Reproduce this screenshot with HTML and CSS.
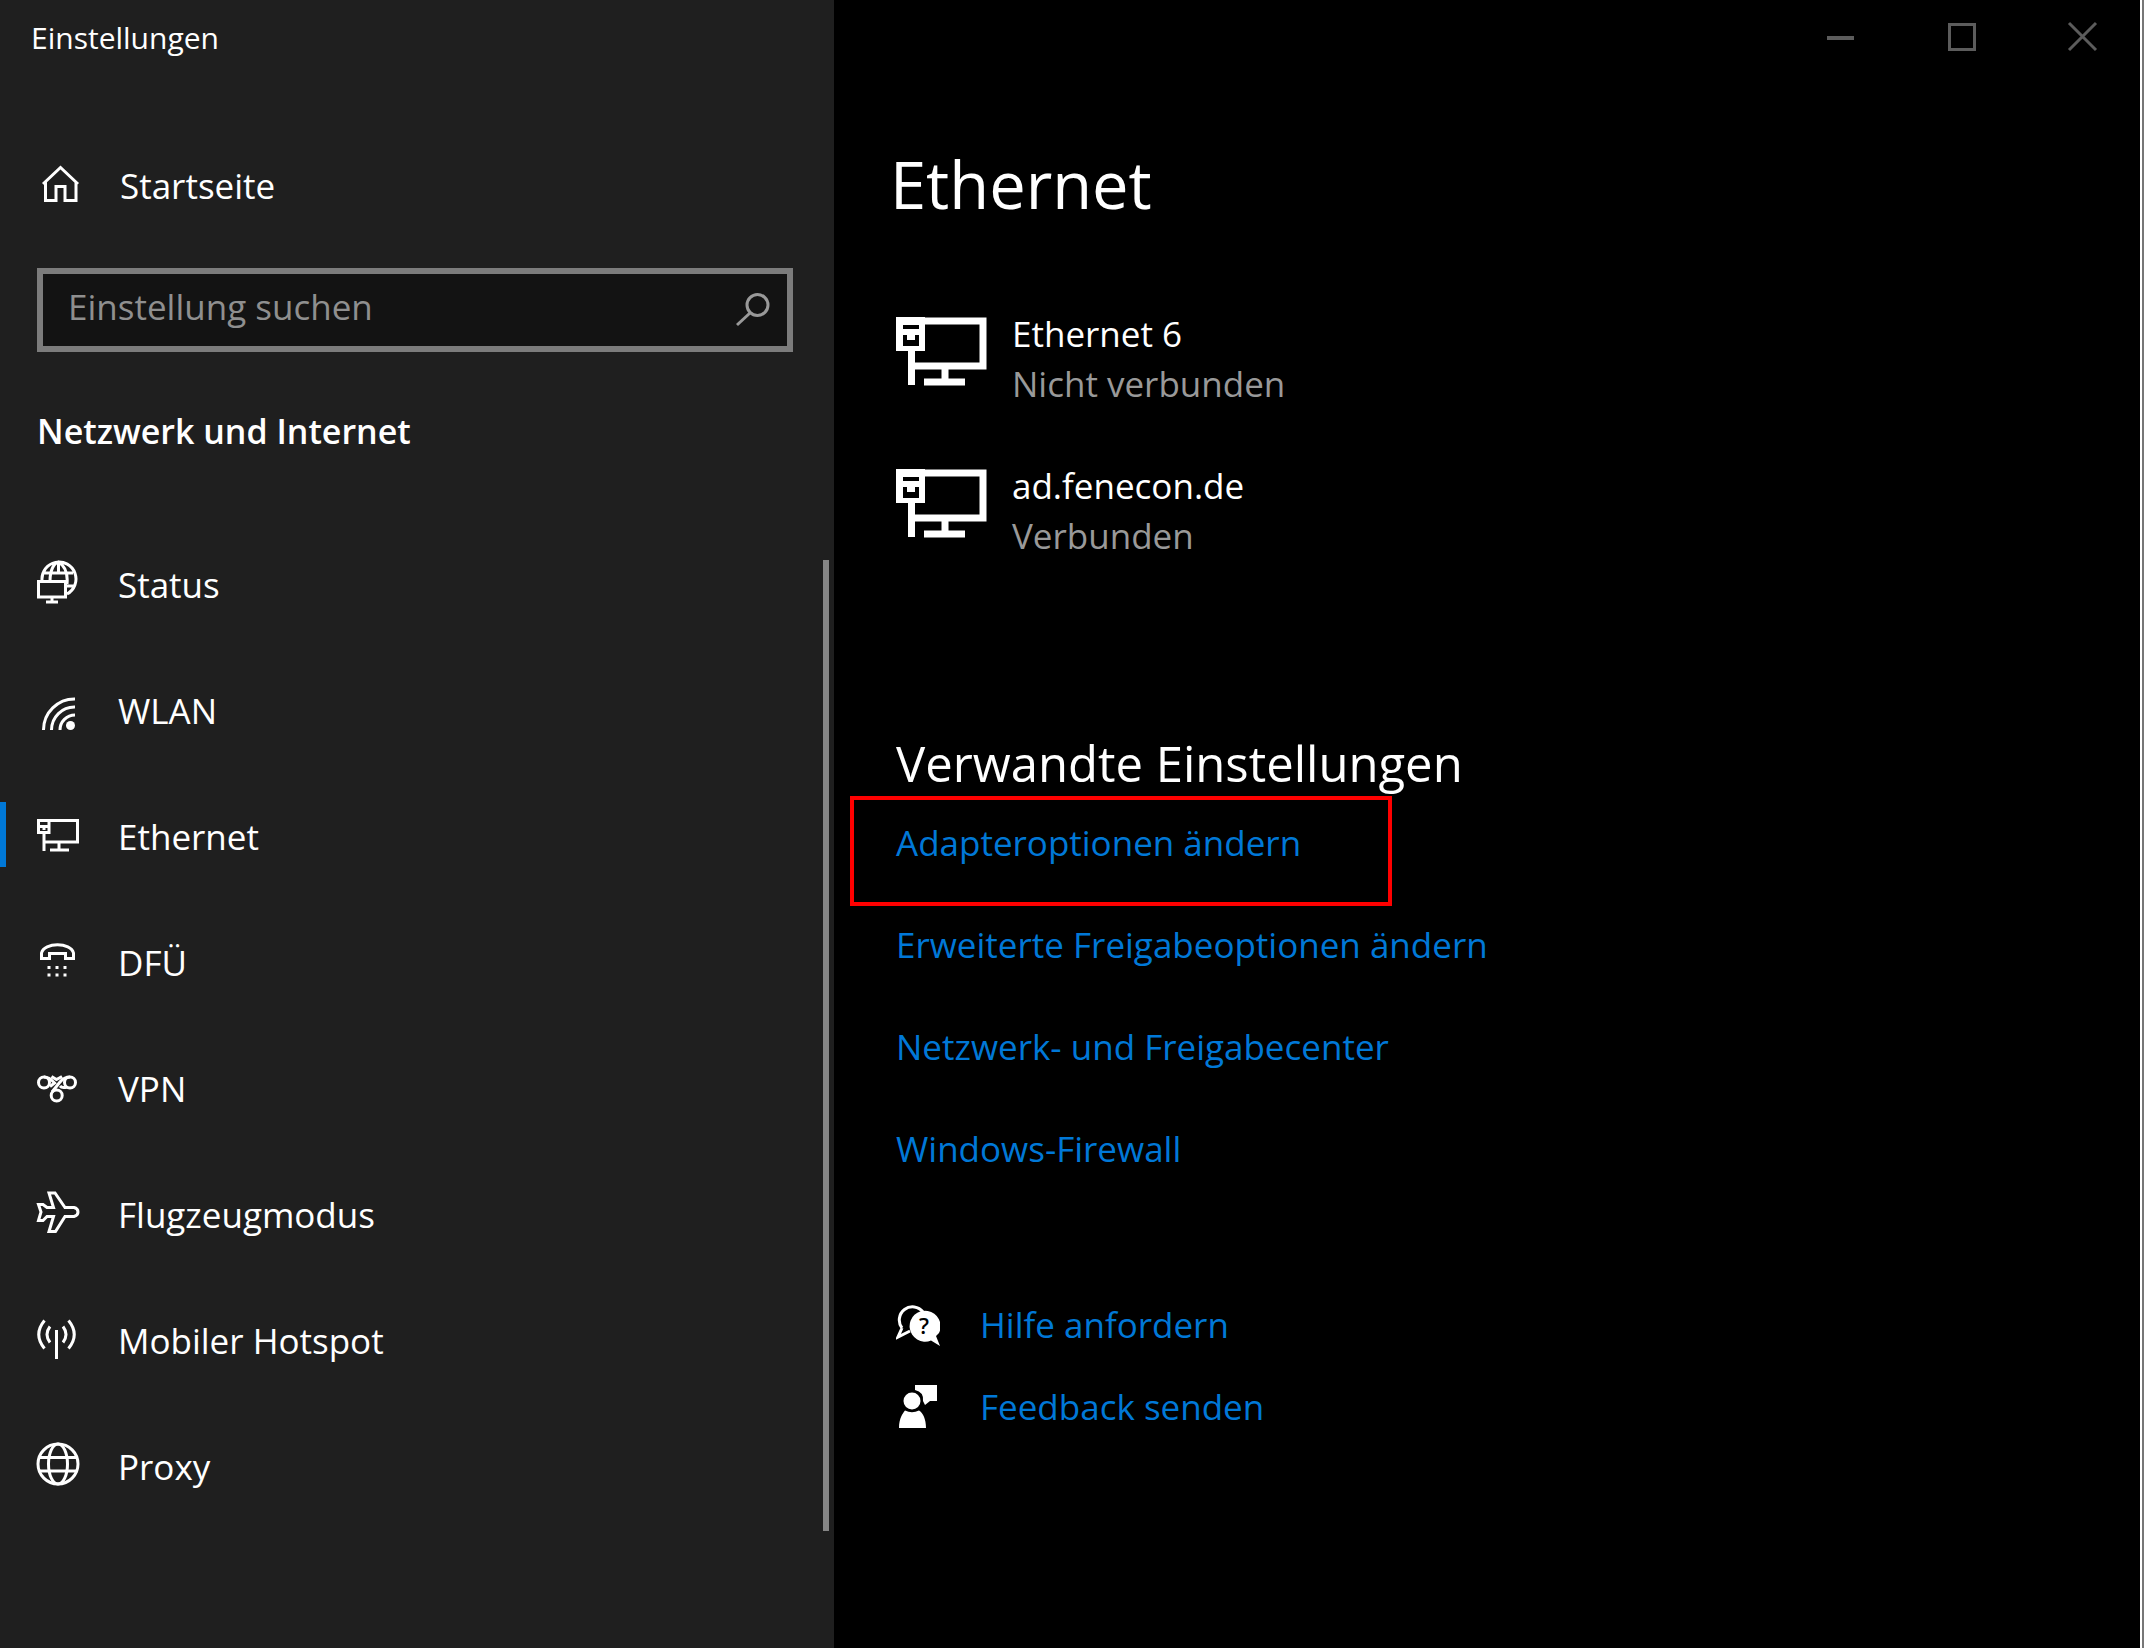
FILE: index.html
```html
<!DOCTYPE html>
<html lang="de">
<head>
<meta charset="utf-8">
<meta name="viewport" content="width=device-width, initial-scale=1">
<title>Einstellungen</title>
<link rel="stylesheet" href="styles.css">
</head>
<body>
<svg class="defs" aria-hidden="true">
  <symbol id="adapter" viewBox="0 0 92 70">
    <path d="M26 4H87V49H16" fill="none" stroke="#fff" stroke-width="7"/>
    <path d="M0 0H29V34H19V68H12V34H0Z" fill="#fff"/>
    <path d="M7 8H23V12H7ZM7 18H11V23H19V18H23V29H7Z" fill="#000"/>
    <path d="M49 50V64M28 65H69" fill="none" stroke="#fff" stroke-width="7"/>
  </symbol>
</svg>
<div class="window">
  <aside class="sidebar">
    <div class="app-title">Einstellungen</div>
    <a class="home" href="#">
      <svg class="icon" viewBox="0 0 44 44"><path d="M3 20L20.500 3.500L38 20M5.500 18V36.500H16V22.500H25V36.500H36V18"/></svg>
      <span>Startseite</span>
    </a>
    <label class="search">
      <input type="text" placeholder="Einstellung suchen" aria-label="Einstellung suchen">
      <svg class="search-icon" viewBox="0 0 36 36"><circle cx="22.500" cy="13" r="10.500"/><path d="M15 21L2 33"/></svg>
    </label>
    <h2 class="category">Netzwerk und Internet</h2>
    <nav class="nav">
      <a href="#"><svg class="icon" viewBox="0 0 44 44"><path d="M6 20A17 17 0 1 1 31 34M8 13H37M31 26H39M14 21C14 10 18 3 22.500 2C29 6 32 14 31 24M22.500 2V13"/><rect x="2.500" y="21.500" width="27" height="15.500"/><path d="M16 37V42M10 42H22"/></svg><span>Status</span></a>
      <a href="#"><svg class="icon" viewBox="0 0 44 44"><path d="M7.500 44A31 31 0 0 1 39 13M15.500 44A23 23 0 0 1 39 21M24 44A15 15 0 0 1 39 29"/><circle class="solid" cx="34.500" cy="39.500" r="4.500"/></svg><span>WLAN</span></a>
      <a class="active" href="#" aria-current="page"><svg class="icon" viewBox="0 0 44 44"><path d="M14 8.500H41.500V30H8M8 22V39M23 30V38M14 38H33M2.500 8.500H13V20.500H2.500ZM4 14.500H12M8 14V18"/></svg><span>Ethernet</span></a>
      <a href="#"><svg class="icon" viewBox="0 0 44 44"><path d="M5.500 20.500V15C8 4 35 4 37.500 15V20.500H29.500V15.500H13.500V20.500Z"/><path d="M11.500 29.500h3M19.500 29.500h3M27.500 29.500h3M11.500 37h3M19.500 37h3M27.500 37h3"/></svg><span>DFÜ</span></a>
      <a href="#"><svg class="icon" viewBox="0 0 44 44"><circle cx="8" cy="18.500" r="5.500"/><circle cx="34" cy="18.500" r="5.500"/><circle cx="20.700" cy="31.500" r="5.500"/><path d="M8 13Q13 13 18.500 19L14 22.500M34 13Q28 13 24 18L16 28M15.500 12.500L20.500 15.500L26 12.500M24 22Q26 24.500 31 23"/></svg><span>VPN</span></a>
      <a href="#"><svg class="icon" viewBox="0 0 44 44"><path d="M13 3H19L29 17.500H38Q42 18.500 42 22Q42 25.500 38 26.500H29L19.500 41.500H13L17.500 26.500H11L7 30.500H2.500L5 22L2.500 14.500H7L11 17.500H17.500Z"/></svg><span>Flugzeugmodus</span></a>
      <a href="#"><svg class="icon" viewBox="0 0 44 44"><path d="M20.500 14V43M14 10.500Q8 18.500 14 26.500M27 10.500Q33 18.500 27 26.500M8.500 4.500Q-3 18.500 8.500 32.500M32.500 4.500Q44 18.500 32.500 32.500"/></svg><span>Mobiler Hotspot</span></a>
      <a href="#"><svg class="icon" viewBox="0 0 44 44"><circle cx="22" cy="22" r="20"/><ellipse cx="22" cy="22" rx="9.500" ry="20"/><path d="M4 15.500H40M4 29H40"/></svg><span>Proxy</span></a>
      <div class="scroll-thumb"></div>
    </nav>
  </aside>
  <main class="main">
    <div class="window-controls">
      <button type="button" aria-label="Minimieren"><svg viewBox="0 0 120 74"><path d="M47 38H74" stroke-width="4"/></svg></button>
      <button type="button" aria-label="Maximieren"><svg viewBox="0 0 120 74"><rect x="49.500" y="24.500" width="25" height="25"/></svg></button>
      <button type="button" aria-label="Schließen"><svg viewBox="0 0 120 74"><path d="M49 23L76 50M76 23L49 50"/></svg></button>
    </div>
    <h1 class="page-title">Ethernet</h1>
    <div class="content">
      <ul class="devices">
        <li><svg class="adapter"><use href="#adapter"/></svg><div><div>Ethernet 6</div><div class="state">Nicht verbunden</div></div></li>
        <li><svg class="adapter"><use href="#adapter"/></svg><div><div>ad.fenecon.de</div><div class="state">Verbunden</div></div></li>
      </ul>
      <h2 class="related-title">Verwandte Einstellungen</h2>
      <ul class="links">
        <li class="marked"><a href="#">Adapteroptionen ändern</a></li>
        <li><a href="#">Erweiterte Freigabeoptionen ändern</a></li>
        <li><a href="#">Netzwerk- und Freigabecenter</a></li>
        <li><a href="#">Windows-Firewall</a></li>
      </ul>
      <ul class="support">
        <li>
          <svg class="support-icon" viewBox="0 0 44 44"><path d="M6 25A12.800 12.800 0 1 1 27 9M6 25L2 34L14 28" fill="none" stroke="#fff" stroke-width="3"/><path d="M35 37.500A15.500 15.500 0 1 1 43 30L40 33L44 43Z" fill="#fff"/><text class="mark" x="28" y="31" text-anchor="middle">?</text></svg>
          <a href="#">Hilfe anfordern</a>
        </li>
        <li>
          <svg class="support-icon" viewBox="0 0 44 44"><path d="M19 0H41V16H34L29 20L27 16Q28 7 19 5Z" fill="#fff"/><circle cx="16" cy="16" r="8.500" fill="#fff"/><path d="M3 43C3 33 7 28 9 25.500Q16 29 23 25.500C27 28 30 34 30 43Z" fill="#fff"/></svg>
          <a href="#">Feedback senden</a>
        </li>
      </ul>
    </div>
  </main>
  <div class="edge"></div>
</div>
</body>
</html>
```
FILE: styles.css
```css
*, *::after { box-sizing: border-box; }

body {
  margin: 0;
  background: #000;
  color: #fff;
  font: 35px/50px "Open Sans", "Noto Sans", sans-serif;
}

h1, h2, ul { margin: 0; padding: 0; font-weight: 400; }
ul { list-style: none; }
a { color: inherit; text-decoration: none; }
.defs { position: absolute; width: 0; height: 0; }

.window { display: flex; min-height: 100vh; }

/* Sidebar */
.sidebar { flex: 0 0 834px; background: #1f1f1f; }

.app-title {
  padding-left: 31px;
  font-size: 30px;
  line-height: 76px;
}

.home {
  display: flex;
  align-items: center;
  gap: 36px;
  height: 100px;
  margin-top: 60px;
  padding-left: 40px;
}

.icon {
  flex: none;
  width: 44px;
  height: 44px;
  fill: none;
  stroke: #fff;
  stroke-width: 3;
}
.icon .solid { fill: #fff; stroke: none; }

.search {
  display: flex;
  align-items: center;
  height: 84px;
  margin: 32px 41px 0 37px;
  padding: 0 16px 0 25px;
  border: 6px solid #7c7c7c;
  background: #131313;
}
.search input {
  flex: 1;
  min-width: 0;
  padding: 0 0 6px;
  border: 0;
  outline: 0;
  background: none;
  color: #fff;
  font: inherit;
}
.search input::placeholder { color: #8f8f8f; opacity: 1; }
.search-icon {
  width: 36px;
  height: 36px;
  fill: none;
  stroke: #999;
  stroke-width: 3;
}

.category {
  margin-top: 55px;
  padding-left: 37px;
  font-size: 34px;
  font-weight: 600;
  line-height: 48px;
}

.nav { position: relative; margin-top: 64px; }
.nav a {
  display: flex;
  align-items: center;
  gap: 38px;
  height: 126px;
  padding-left: 36px;
}
.nav span { padding-top: 6px; }
.nav .active {
  background: linear-gradient(#0078d7, #0078d7) left center / 6px 65px no-repeat;
}
.scroll-thumb {
  position: absolute;
  top: 41px;
  right: 5px;
  bottom: -4px;
  width: 6px;
  background: #868686;
}

/* Content pane */
.main { flex: 1; min-width: 0; }

.window-controls { display: flex; justify-content: flex-end; }
.window-controls button {
  width: 120px;
  height: 74px;
  padding: 0;
  border: 0;
  background: none;
}
.window-controls svg {
  display: block;
  width: 120px;
  height: 74px;
  fill: none;
  stroke: #5c5c5c;
  stroke-width: 3;
}

.page-title {
  margin-top: 65px;
  padding-left: 56px;
  font-size: 65px;
  line-height: 90px;
}

.content { padding-left: 62px; }

.devices { display: grid; gap: 52px; margin-top: 80px; }
.devices li { display: flex; gap: 24px; }
.adapter { flex: none; width: 92px; height: 70px; margin-top: 8px; }
.state { color: #999; }

.related-title { margin-top: 175px; font-size: 49px; line-height: 54px; }

.links a, .support a { color: #0078d7; }
.links li { position: relative; padding-top: 4px; line-height: 98px; }
.marked::after {
  content: "";
  position: absolute;
  top: 6px;
  left: -46px;
  width: 542px;
  height: 110px;
  border: 4px solid #f00;
  pointer-events: none;
}

.support { margin-top: 86px; }
.support li { display: flex; align-items: center; gap: 40px; height: 82px; }
.support-icon { flex: none; width: 44px; height: 44px; }
.mark { fill: #000; font-size: 22px; font-weight: 600; }

/* Right window border */
.edge { flex: 0 0 6px; border: solid #fff; border-width: 0 2px; background: #777; }
```
